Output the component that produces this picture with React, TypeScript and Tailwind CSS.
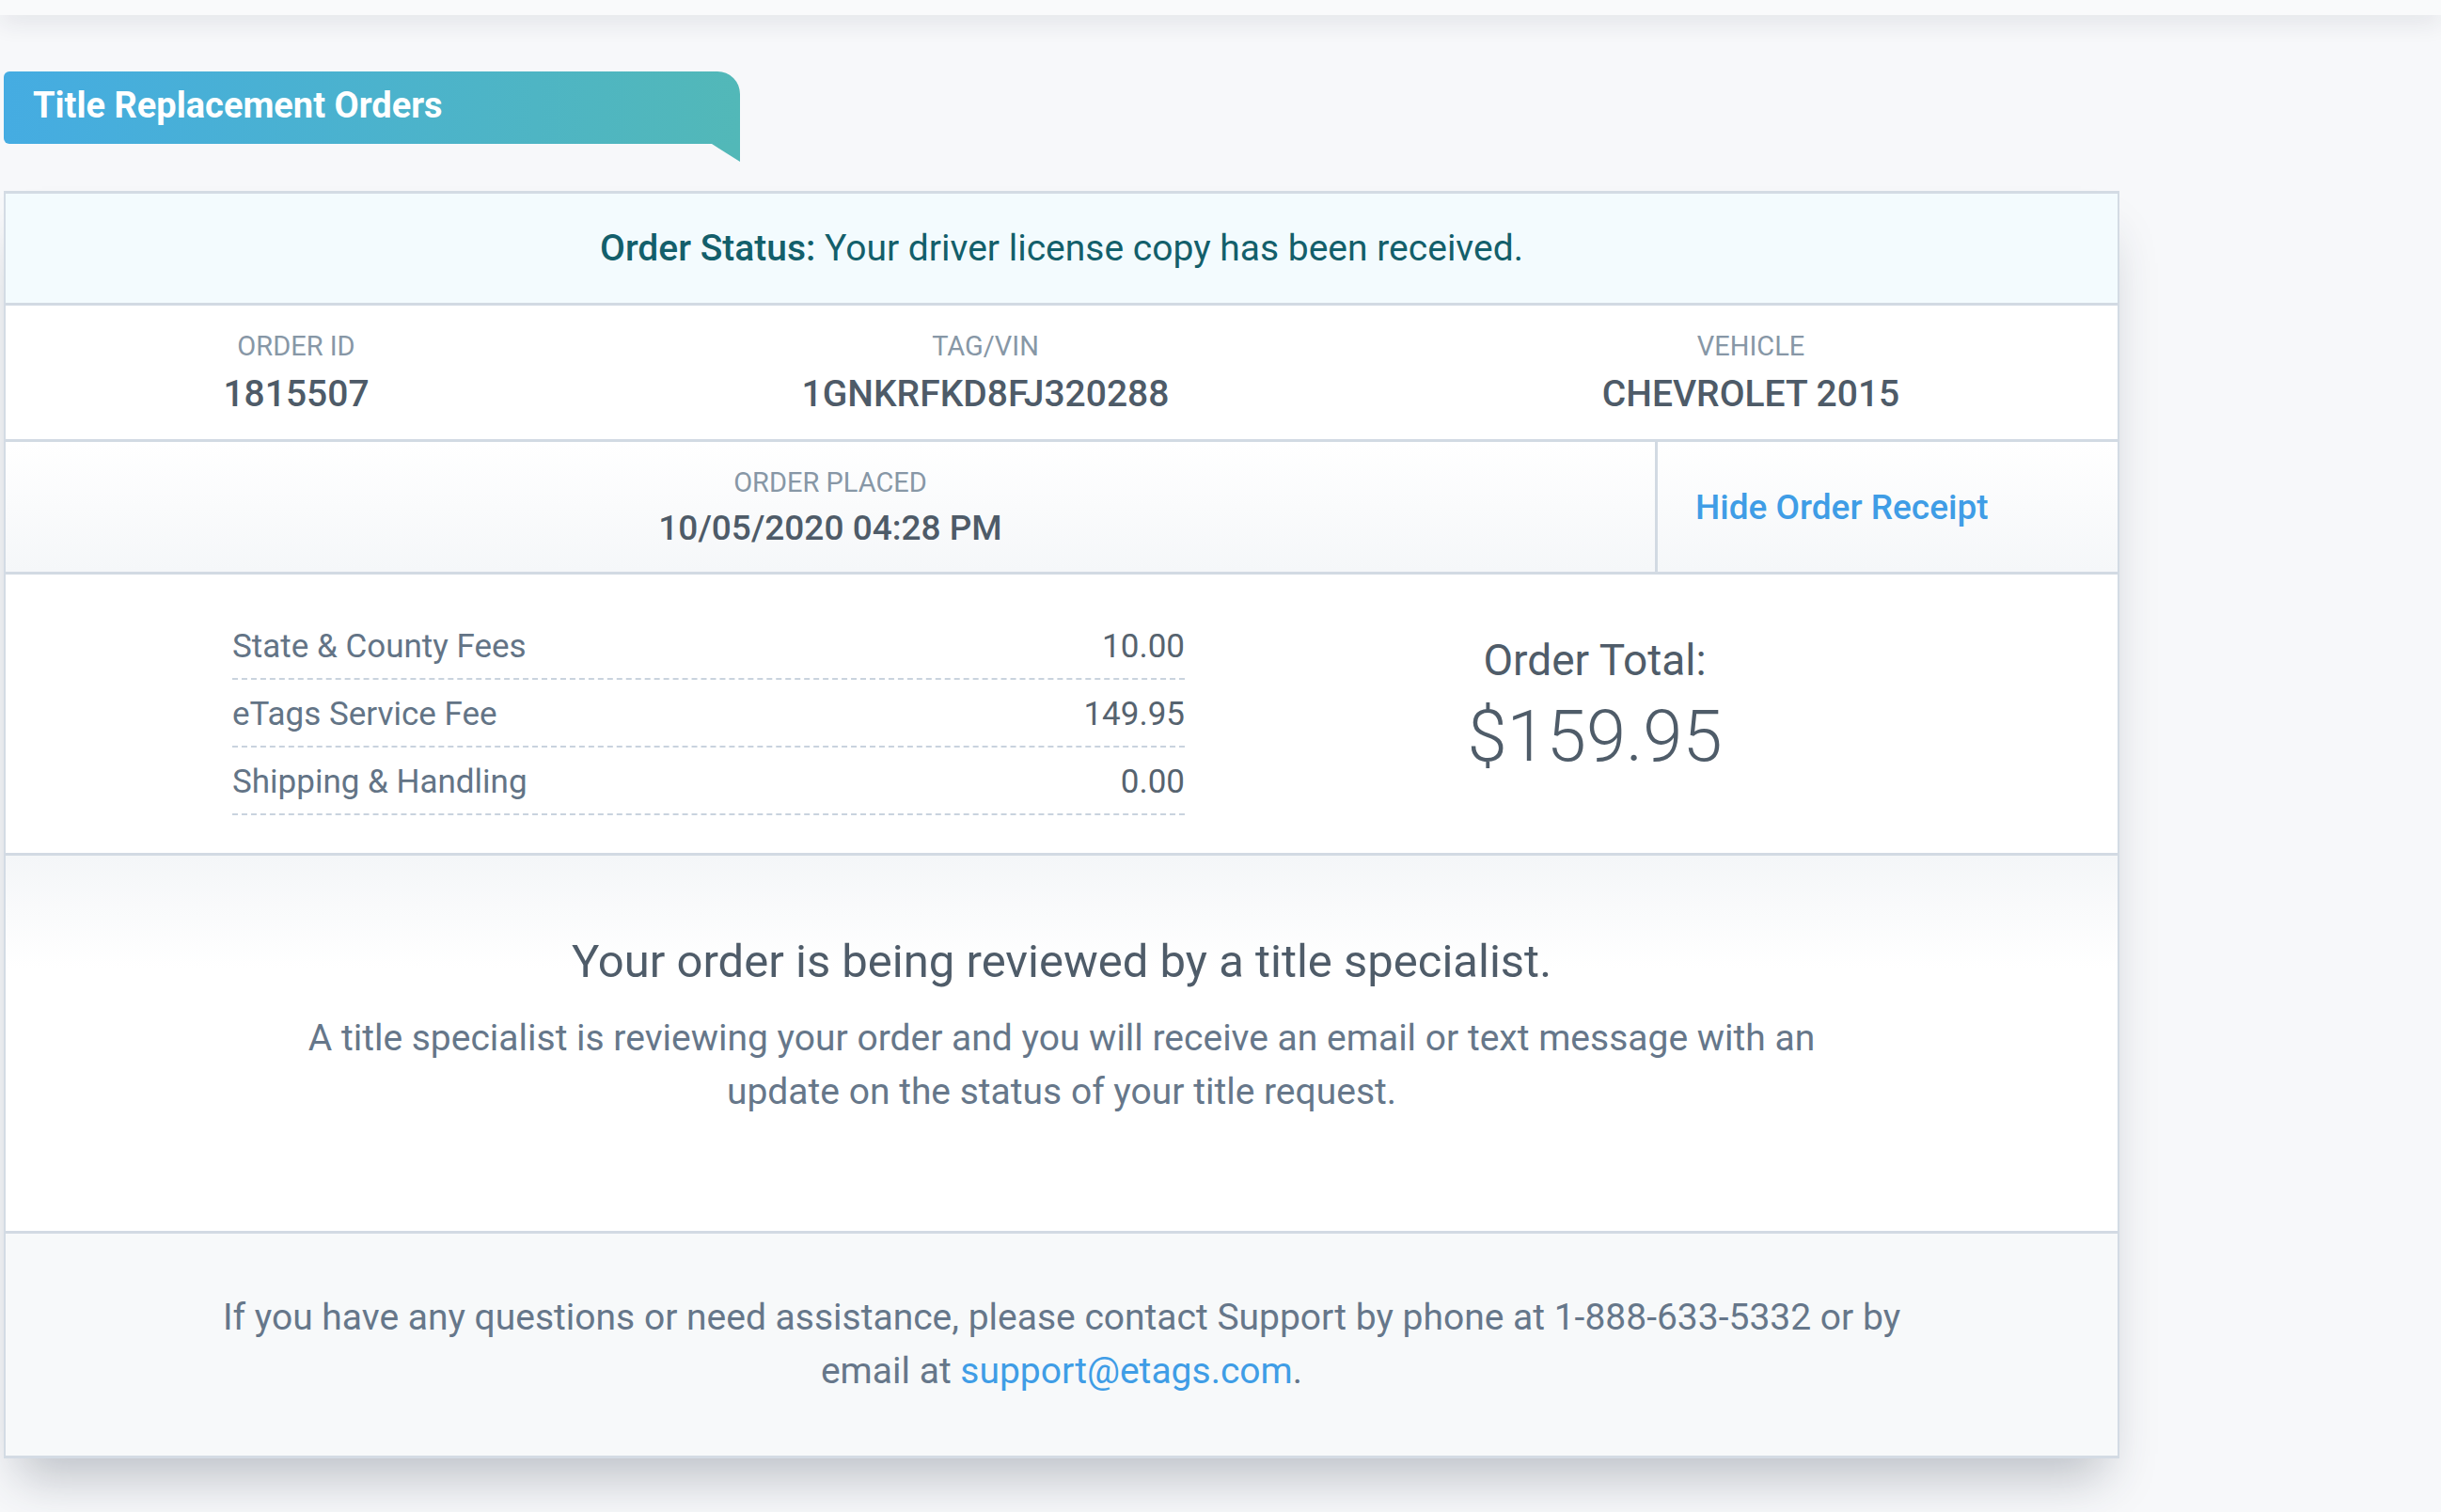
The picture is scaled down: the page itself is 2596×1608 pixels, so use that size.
const fees = [
  { label: 'State & County Fees', amount: '10.00' },
  { label: 'eTags Service Fee', amount: '149.95' },
  { label: 'Shipping & Handling', amount: '0.00' }
];

const details = [
  { label: 'ORDER ID', value: '1815507' },
  { label: 'TAG/VIN', value: '1GNKRFKD8FJ320288' },
  { label: 'VEHICLE', value: 'CHEVROLET 2015' }
];

const Detail = ({ label, value, gap, size }: { label: string; value: string; gap: string; size: string }) => (
  <div className={`flex flex-col items-center justify-center ${gap}`}>
    <span className="text-[29px] leading-none text-[#8797a6]">{label}</span>
    <span className={`${size} leading-none font-medium text-[#4e5b68]`}>{value}</span>
  </div>
);

const App = () => {
  return (
    <div className="min-h-screen bg-[#f7f8fa] font-['Roboto',sans-serif]">
      <div className="h-[16px] bg-[#f9fafb] shadow-[0_6px_26px_rgba(30,40,60,0.13)]" />

      <div className="pl-[4px] pt-[60px] pb-[60px]">
        {/* heading tab */}
        <div className="relative w-[783px] h-[77px] rounded-l-[6px] rounded-tr-[24px] bg-gradient-to-r from-[#45ace2] to-[#52b8b8] flex items-center pl-[31px] pb-[6px]">
          <h1 className="text-[38px] font-bold leading-none text-white">Title Replacement Orders</h1>
          <svg className="absolute right-0 top-full" width="30" height="19" viewBox="0 0 30 19">
            <polygon points="0,0 30,0 30,19" fill="#52b8b8" />
          </svg>
        </div>

        {/* order card */}
        <div className="mt-[50px] w-[2250px] border-x-2 border-t-[3px] border-b-[3px] border-[#d3dbe4] bg-white shadow-[0_36px_50px_-16px_rgba(40,50,70,0.28)]">
          <div className="h-[119px] bg-[#f3fbfe] flex items-center justify-center border-b-[3px] border-[#d2dae3]">
            <p className="text-[39px] leading-none text-[#135f6b]">
              <span className="font-medium">Order Status:</span> Your driver license copy has been received.
            </p>
          </div>

          <div className="h-[145px] grid grid-cols-[618px_848px_1fr] border-b-[3px] border-[#d2dae3]">
            {details.map((d) => (
              <Detail key={d.label} label={d.label} value={d.value} gap="gap-[17px]" size="text-[39px]" />
            ))}
          </div>

          <div className="h-[141px] flex border-b-[3px] border-[#d2dae3] bg-gradient-to-b from-white to-[#f5f7f9]">
            <div className="w-[1757px] border-r-[3px] border-[#d2dae3] flex justify-center">
              <Detail label="ORDER PLACED" value="10/05/2020 04:28 PM" gap="gap-[15px]" size="text-[37px]" />
            </div>
            <div className="flex-1 flex items-center pl-[40px]">
              <a className="text-[37px] leading-none font-medium text-[#3f9de6]" href="#">
                Hide Order Receipt
              </a>
            </div>
          </div>

          <div className="h-[299px] flex items-start border-b-[3px] border-[#d2dae3]">
            <div className="ml-[241px] mt-[40px] w-[1013px]">
              {fees.map((f) => (
                <div
                  key={f.label}
                  className="flex justify-between pt-[19px] pb-[16px] border-b-2 border-dashed border-[#c9d3de] text-[35px] leading-none"
                >
                  <span className="text-[#637486]">{f.label}</span>
                  <span className="text-[#56636f]">{f.amount}</span>
                </div>
              ))}
            </div>
            <div className="flex-1 pr-[120px] mt-[68px] flex flex-col items-center gap-[20px] text-[#4f5c69]">
              <span className="text-[46px] leading-none">Order Total:</span>
              <span className="text-[76px] leading-none font-light">$159.95</span>
            </div>
          </div>

          <div className="h-[402px] pt-[88px] flex flex-col items-center border-b-[3px] border-[#d2dae3] bg-gradient-to-b from-[#f4f6f8] via-white via-[30%] to-white">
            <h2 className="text-[49px] leading-none text-[#4f5c69]">Your order is being reviewed by a title specialist.</h2>
            <p className="mt-[29px] max-w-[1680px] text-center text-[39px] leading-[57px] text-[#66778a]">
              A title specialist is reviewing your order and you will receive an email or text message with an update
              on the status of your title request.
            </p>
          </div>

          <div className="h-[236px] bg-[#f7f9fa] flex items-center justify-center">
            <p className="max-w-[1850px] text-center text-[39px] leading-[57px] text-[#66778a]">
              If you have any questions or need assistance, please contact Support by phone at 1-888-633-5332 or by
              email at <a className="text-[#3f9de6]" href="#">support@etags.com</a>.
            </p>
          </div>
        </div>
      </div>
    </div>
  );
};

export default App;
